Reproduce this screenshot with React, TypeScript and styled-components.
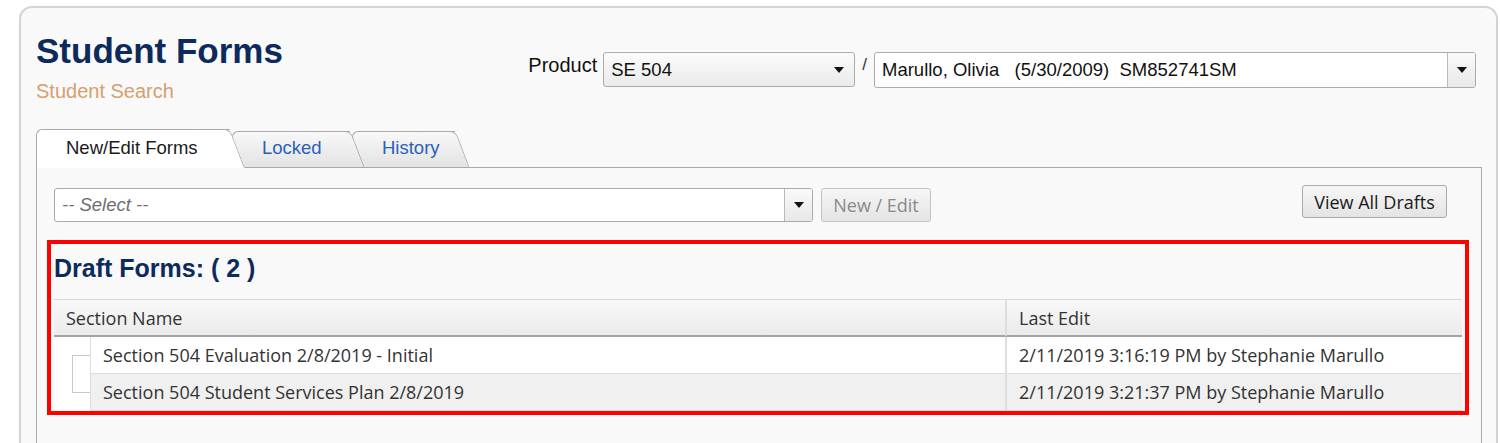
import React from "react";
import styled, { createGlobalStyle } from "styled-components";

const GlobalStyle = createGlobalStyle`
  html, body { margin: 0; padding: 0; background: #ffffff; }
  body { font-family: "Liberation Sans", Arial, sans-serif; }
  * { box-sizing: border-box; }
`;

const NAVY = "#0c2b5c";
const SEGOE = `"Open Sans", "Noto Sans", "Liberation Sans", sans-serif`;

const Page = styled.div`
  height: 443px;
  overflow: hidden;
  padding: 6px 2px 0 19px;
`;

const Card = styled.div`
  border: 2px solid #d3d3d3;
  border-bottom: none;
  border-radius: 13px 13px 0 0;
  background: #f9f9f9;
  padding: 23px 14px 0 15px;
  min-height: 470px;
`;

const Header = styled.div`
  display: flex;
  justify-content: space-between;
  align-items: flex-start;
  padding-right: 6px;
`;

const TitleBlock = styled.div`
  display: flex;
  flex-direction: column;
`;

const Title = styled.h1`
  margin: 0;
  font-size: 35px;
  line-height: 40px;
  font-weight: 700;
  color: ${NAVY};
`;

const Subtitle = styled.div`
  margin-top: 8px;
  font-size: 20px;
  line-height: 24px;
  color: #d4a070;
`;

const ProductBar = styled.div`
  display: flex;
  align-items: flex-start;
  margin-top: 21px;
`;

const ProductLabel = styled.span`
  font-size: 20px;
  line-height: 28px;
  margin-top: -1px;
  margin-right: 6px;
  color: #111;
`;

const Slash = styled.span`
  font-size: 17px;
  line-height: 24px;
  margin: 1px 7px 0 7px;
  color: #333;
`;

const Arrow = styled.span`
  width: 0;
  height: 0;
  border-left: 5px solid transparent;
  border-right: 5px solid transparent;
  border-top: 6px solid #111;
`;

const SelectBox = styled.div<{ $w: number; $h: number; $bg: string }>`
  display: flex;
  align-items: stretch;
  width: ${(p) => p.$w}px;
  height: ${(p) => p.$h}px;
  border: 1px solid #ababab;
  border-radius: 3px;
  background: ${(p) => p.$bg};
  overflow: hidden;
`;

const SelectText = styled.span<{ $italic?: boolean; $color?: string }>`
  flex: 1;
  display: flex;
  align-items: center;
  padding-left: 7px;
  font-size: 18.5px;
  white-space: pre;
  font-style: ${(p) => (p.$italic ? "italic" : "normal")};
  color: ${(p) => p.$color || "#111"};
`;

const PlainArrowSlot = styled.span`
  display: flex;
  align-items: center;
  justify-content: center;
  width: 30px;
`;

const ArrowButton = styled.span`
  display: flex;
  align-items: center;
  justify-content: center;
  width: 28px;
  border-left: 1px solid #b9b9b9;
  background: linear-gradient(#fafafa, #e8e8e8);
`;

const Tabs = styled.div`
  display: flex;
  align-items: flex-end;
  margin-top: 26px;
  margin-bottom: -1px;
  position: relative;
  z-index: 2;
`;

const Tab = styled.div<{ $active?: boolean; $w: number; $z: number }>`
  position: relative;
  isolation: isolate;
  z-index: ${(p) => p.$z};
  width: ${(p) => p.$w}px;
  height: ${(p) => (p.$active ? 39 : 37)}px;
  margin-right: -13px;
  padding-left: 30px;
  padding-bottom: ${(p) => (p.$active ? 1 : 3)}px;
  display: flex;
  align-items: center;
  font-size: 18.5px;
  color: ${(p) => (p.$active ? "#1a1a1a" : "#2b5fbd")};

  &::before {
    content: "";
    position: absolute;
    z-index: -1;
    left: 0;
    top: 0;
    bottom: 0;
    right: 15px;
    border: 1px solid #a9a9a9;
    border-right: none;
    border-bottom: ${(p) => (p.$active ? "none" : "1px solid #a9a9a9")};
    border-radius: 6px 0 0 0;
    background: ${(p) => (p.$active ? "#ffffff" : "linear-gradient(#f8f8f8, #e3e3e3)")};
  }

  &::after {
    content: "";
    position: absolute;
    z-index: -1;
    right: 0;
    top: 0;
    bottom: 0;
    width: 34px;
    border-top: 1px solid #a9a9a9;
    border-right: 1px solid #a9a9a9;
    border-bottom: ${(p) => (p.$active ? "none" : "1px solid #a9a9a9")};
    border-radius: 0 6px 0 0;
    transform-origin: bottom right;
    transform: skewX(21deg);
    background: ${(p) => (p.$active ? "#ffffff" : "linear-gradient(#f8f8f8, #e3e3e3)")};
  }
`;

const Panel = styled.div`
  border: 1px solid #a9a9a9;
  border-bottom: none;
  background: #f9f9f9;
  padding: 20px 19px 0 17px;
  min-height: 300px;
`;

const SelectRow = styled.div`
  display: flex;
  align-items: flex-start;
  padding-right: 15px;
`;

const Button = styled.div<{ $w: number; $h: number; $disabled?: boolean }>`
  width: ${(p) => p.$w}px;
  height: ${(p) => p.$h}px;
  display: flex;
  align-items: center;
  justify-content: center;
  border: 1px solid ${(p) => (p.$disabled ? "#c4c4c4" : "#a9a9a9")};
  border-radius: 3px;
  background: linear-gradient(#f6f6f6, #e4e4e4);
  font-family: ${SEGOE};
  font-size: 18px;
  color: ${(p) => (p.$disabled ? "#8a8a8a" : "#1a1a1a")};
`;

const NewEditButton = styled(Button)`
  margin-left: 8px;
`;

const ViewAllButton = styled(Button)`
  margin-left: auto;
  margin-top: -3px;
`;

const DraftBox = styled.div`
  margin: 18px -7px 0;
  border: 4px solid #ff0000;
  padding: 9px 3px 0;
`;

const DraftTitle = styled.h2`
  margin: 0;
  font-size: 25px;
  line-height: 30px;
  font-weight: 700;
  color: ${NAVY};
`;

const Table = styled.div`
  margin-top: 16px;
  display: grid;
  grid-template-columns: 36px 915px 1fr;
  grid-template-rows: 38px 37px 37px;
  font-family: ${SEGOE};
  font-size: 18px;
  color: #333;
`;

const HeadCell = styled.div<{ $span?: number; $divider?: boolean }>`
  grid-column: span ${(p) => p.$span || 1};
  display: flex;
  align-items: center;
  padding-left: 12px;
  border-top: 1px solid #d9d9d9;
  border-bottom: 2px solid #a3a3a3;
  border-left: ${(p) => (p.$divider ? "2px solid #dedede" : "none")};
  background: linear-gradient(#f8f8f8, #ebebeb);
`;

const GroupCell = styled.div`
  grid-row: span 2;
  background: #ffffff;
  padding: 18px 0 18px 18px;
`;

const Bracket = styled.div`
  height: 100%;
  border: 1px solid #c9c9c9;
  border-right: none;
`;

const BodyCell = styled.div<{ $alt?: boolean; $divider?: boolean }>`
  display: flex;
  align-items: center;
  padding-left: ${(p) => (p.$divider ? 12 : 12)}px;
  border-left: ${(p) => (p.$divider ? "2px solid #dedede" : "1px solid #dcdcdc")};
  border-bottom: 1px solid #dcdcdc;
  background: ${(p) => (p.$alt ? "#f0f0f0" : "#ffffff")};
`;

const rows = [
  { name: "Section 504 Evaluation 2/8/2019 - Initial", edit: "2/11/2019 3:16:19 PM by Stephanie Marullo" },
  { name: "Section 504 Student Services Plan 2/8/2019", edit: "2/11/2019 3:21:37 PM by Stephanie Marullo" },
];

export default function App() {
  return (
    <>
      <GlobalStyle />
      <Page>
        <Card>
          <Header>
            <TitleBlock>
              <Title>Student Forms</Title>
              <Subtitle>Student Search</Subtitle>
            </TitleBlock>
            <ProductBar>
              <ProductLabel>Product</ProductLabel>
              <SelectBox $w={252} $h={35} $bg="linear-gradient(#fbfbfb, #ebebeb)">
                <SelectText>SE 504</SelectText>
                <PlainArrowSlot>
                  <Arrow />
                </PlainArrowSlot>
              </SelectBox>
              <Slash>/</Slash>
              <SelectBox $w={602} $h={36} $bg="#ffffff">
                <SelectText>{"Marullo, Olivia   (5/30/2009)  SM852741SM"}</SelectText>
                <ArrowButton>
                  <Arrow />
                </ArrowButton>
              </SelectBox>
            </ProductBar>
          </Header>

          <Tabs>
            <Tab $active $w={209} $z={3}>New/Edit Forms</Tab>
            <Tab $w={133} $z={2}>Locked</Tab>
            <Tab $w={118} $z={1}>History</Tab>
          </Tabs>

          <Panel>
            <SelectRow>
              <SelectBox $w={759} $h={34} $bg="#ffffff">
                <SelectText $italic $color="#6e6e6e">-- Select --</SelectText>
                <ArrowButton>
                  <Arrow />
                </ArrowButton>
              </SelectBox>
              <NewEditButton $w={110} $h={34} $disabled>New / Edit</NewEditButton>
              <ViewAllButton $w={145} $h={33}>View All Drafts</ViewAllButton>
            </SelectRow>

            <DraftBox>
              <DraftTitle>Draft Forms: ( 2 )</DraftTitle>
              <Table>
                <HeadCell $span={2}>Section Name</HeadCell>
                <HeadCell $divider>Last Edit</HeadCell>
                <GroupCell>
                  <Bracket />
                </GroupCell>
                {rows.map((r, i) => (
                  <React.Fragment key={r.name}>
                    <BodyCell $alt={i === 1}>{r.name}</BodyCell>
                    <BodyCell $alt={i === 1} $divider>{r.edit}</BodyCell>
                  </React.Fragment>
                ))}
              </Table>
            </DraftBox>
          </Panel>
        </Card>
      </Page>
    </>
  );
}
